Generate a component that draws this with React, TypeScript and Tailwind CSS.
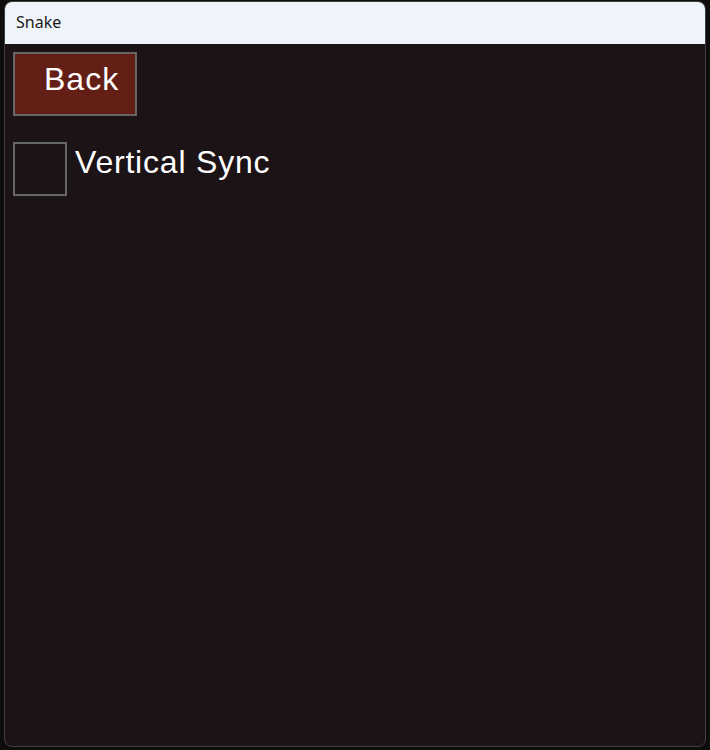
import React from "react";

export default function App() {
  return (
    <div className="w-[710px] h-[750px] bg-[#0d0d0d] pt-px pl-[4px]">
      <div className="w-[702px] h-[746px] rounded-[8px] border border-[#3f3f3f] overflow-hidden flex flex-col bg-[#1c1317]">
        <div className="h-[42px] shrink-0 bg-[#eff3fa] flex items-center pl-[11px] pb-[2px]">
          <span className="text-[16px] text-[#1a1a1a] leading-none" style={{ fontFamily: '"Noto Sans", sans-serif' }}>
            Snake
          </span>
        </div>
        <div className="flex-1 flex flex-col items-start pt-[8px] pl-[8px]">
          <button
            className="w-[124px] h-[64px] bg-[#631e16] border-2 border-[#666666] flex items-center pl-[29px] pb-[10px] text-white text-[32px] leading-none tracking-[1px]"
            style={{ fontFamily: '"Liberation Sans", sans-serif' }}
          >
            Back
          </button>
          <div className="flex items-start mt-[26px] gap-[8px]">
            <div className="w-[54px] h-[54px] border-2 border-[#666666] bg-[#1c1317]" />
            <span
              className="text-white text-[32px] leading-none mt-[4px] tracking-[0.8px]"
              style={{ fontFamily: '"Liberation Sans", sans-serif' }}
            >
              Vertical Sync
            </span>
          </div>
        </div>
      </div>
    </div>
  );
}
